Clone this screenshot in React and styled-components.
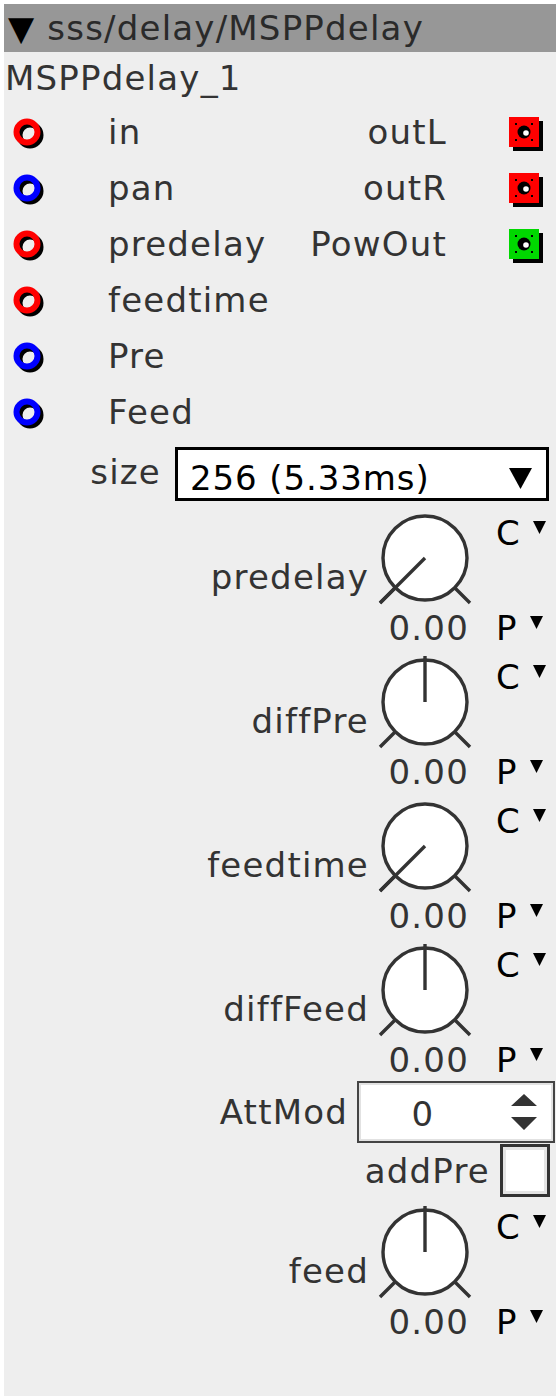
import React from 'react';
import styled, { createGlobalStyle } from 'styled-components';

const GlobalStyle = createGlobalStyle`
  body {
    margin: 0;
    background: #fff;
  }
`;

const Panel = styled.div`
  margin: 4px;
  width: 552px;
  height: 1392px;
  background: #eeeeee;
  font-family: "DejaVu Sans", sans-serif;
  font-size: 34px;
  letter-spacing: 1.2px;
  color: #333;
  overflow: hidden;
`;

const TitleBar = styled.div`
  height: 48px;
  line-height: 48px;
  padding-left: 4px;
  background: #979797;
  color: #2a2a2a;
  white-space: nowrap;
`;

const TitleArrow = styled.span`
  color: #000;
`;

const InstanceName = styled.div`
  height: 52px;
  line-height: 52px;
  padding-left: 1px;
`;

const Ports = styled.div`
  display: grid;
  grid-template-columns: 1fr auto;
`;

const PortColumn = styled.div`
  display: flex;
  flex-direction: column;
`;

const InRow = styled.div`
  height: 56px;
  display: flex;
  align-items: center;
  padding-left: 10px;
`;

const OutRow = styled.div`
  height: 56px;
  display: flex;
  align-items: center;
  justify-content: flex-end;
  padding-right: 17px;
`;

const PortLabel = styled.span`
  line-height: 56px;
  margin-left: ${p => (p.$out ? 0 : 68)}px;
  margin-right: ${p => (p.$out ? 62 : 0)}px;
`;

const PortSvg = styled.svg`
  display: block;
  overflow: visible;
  flex: none;
`;

const SizeRow = styled.div`
  margin-top: 7px;
  height: 54px;
  display: flex;
  justify-content: flex-end;
  align-items: center;
  padding-right: 7px;
`;

const SizeLabel = styled.span`
  margin-right: 14px;
  margin-bottom: 4px;
`;

const Dropdown = styled.div`
  box-sizing: border-box;
  width: 374px;
  height: 54px;
  border: 3px solid #000;
  background: #fff;
  color: #000;
  letter-spacing: 0.9px;
  display: flex;
  align-items: center;
  justify-content: space-between;
  padding: 8px 14px 0 12px;
`;

const KnobBlock = styled.div`
  display: grid;
  grid-template-columns: 1fr 96px 83px;
  grid-template-rows: 102px 36px;
  margin-top: ${p => p.$top}px;
  margin-bottom: 6px;
`;

const KnobLabel = styled.span`
  justify-self: end;
  padding-right: 8px;
  margin-top: 51px;
  line-height: 36px;
`;

const KnobSvg = styled.svg`
  display: block;
  margin-top: 2px;
`;

const ModeCell = styled.div`
  display: flex;
  align-items: flex-start;
  padding-left: 23px;
  padding-top: ${p => p.$top}px;
  line-height: 36px;
  color: #000;
`;

const ModeArrow = styled.svg`
  display: block;
  margin-left: 12px;
  margin-top: 6px;
`;

const Value = styled.span`
  grid-column: 2;
  justify-self: end;
  margin-right: 4px;
  line-height: 36px;
  white-space: nowrap;
`;

const FieldRow = styled.div`
  display: flex;
  justify-content: flex-end;
  align-items: center;
  height: ${p => p.$h}px;
  margin-top: ${p => p.$top}px;
  padding-right: ${p => p.$right}px;
`;

const FieldLabel = styled.span`
  margin-right: ${p => p.$gap}px;
`;

const Spinner = styled.div`
  box-sizing: border-box;
  width: 198px;
  height: 62px;
  border: 2px solid #444;
  box-shadow: inset 0 0 0 2px #e2e2e2;
  background: #fff;
  display: flex;
  align-items: center;
`;

const SpinValue = styled.span`
  width: 128px;
  text-align: center;
  padding-top: 4px;
`;

const SpinArrows = styled.svg`
  display: block;
  margin-left: 24px;
`;

const Checkbox = styled.div`
  box-sizing: border-box;
  width: 50px;
  height: 53px;
  border: 3px solid #333;
  box-shadow: inset 0 0 0 3px #e4e4e4;
  background: #fff;
`;

const inputs = [
  { name: 'in', color: '#ff0000' },
  { name: 'pan', color: '#0000ff' },
  { name: 'predelay', color: '#ff0000' },
  { name: 'feedtime', color: '#ff0000' },
  { name: 'Pre', color: '#0000ff' },
  { name: 'Feed', color: '#0000ff' },
];

const outputs = [
  { name: 'outL', color: '#ff0000' },
  { name: 'outR', color: '#ff0000' },
  { name: 'PowOut', color: '#00d800' },
];

function InPort({ color }) {
  return (
    <PortSvg width="26" height="26" viewBox="0 0 26 26">
      <circle cx="16" cy="16" r="10.5" fill="none" stroke="#000" strokeWidth="6" />
      <circle cx="13" cy="13" r="10.5" fill="none" stroke={color} strokeWidth="6" />
    </PortSvg>
  );
}

function OutPort({ color }) {
  return (
    <PortSvg width="30" height="30" viewBox="0 0 30 30">
      <rect x="4" y="4" width="30" height="30" fill="#000" />
      <rect x="0" y="0" width="30" height="30" fill={color} />
      <g fill="#000">
        <rect x="6" y="6" width="2" height="2" />
        <rect x="22" y="6" width="2" height="2" />
        <rect x="6" y="22" width="2" height="2" />
        <rect x="22" y="22" width="2" height="2" />
      </g>
      <circle cx="15" cy="15" r="6.5" fill="#000" />
      <circle cx="17" cy="16" r="2.8" fill="#fff" />
    </PortSvg>
  );
}

function SmallArrow() {
  return (
    <ModeArrow width="13" height="13" viewBox="0 0 13 13">
      <path d="M0 0 H13 L6.5 13 Z" fill="#000" />
    </ModeArrow>
  );
}

function Knob({ label, bipolar, top = 0 }) {
  const tip = bipolar ? 'M48 48 L48 2' : 'M48 48 L3 93';
  return (
    <KnobBlock $top={top}>
      <KnobLabel>{label}</KnobLabel>
      <KnobSvg width="96" height="96" viewBox="0 0 96 96">
        <circle cx="48" cy="48" r="42" fill="#fff" stroke="#333" strokeWidth="3.4" />
        <path d="M18.3 77.7 L3 93 M77.7 77.7 L93 93" stroke="#333" strokeWidth="3.4" />
        <path d={tip} stroke="#333" strokeWidth="3.4" />
      </KnobSvg>
      <ModeCell $top={7}>C<SmallArrow /></ModeCell>
      <Value>0.00</Value>
      <ModeCell $top={0}>P<SmallArrow /></ModeCell>
    </KnobBlock>
  );
}

export default function App() {
  return (
    <>
      <GlobalStyle />
      <Panel>
        <TitleBar>
          <TitleArrow>▼</TitleArrow> sss/delay/MSPPdelay
        </TitleBar>
        <InstanceName>MSPPdelay_1</InstanceName>

        <Ports>
          <PortColumn>
            {inputs.map(p => (
              <InRow key={p.name}>
                <InPort color={p.color} />
                <PortLabel>{p.name}</PortLabel>
              </InRow>
            ))}
          </PortColumn>
          <PortColumn>
            {outputs.map(p => (
              <OutRow key={p.name}>
                <PortLabel $out>{p.name}</PortLabel>
                <OutPort color={p.color} />
              </OutRow>
            ))}
          </PortColumn>
        </Ports>

        <SizeRow>
          <SizeLabel>size</SizeLabel>
          <Dropdown>
            <span>256 (5.33ms)</span>
            <svg width="23" height="21" viewBox="0 0 23 21">
              <path d="M0 0 H23 L11.5 21 Z" fill="#000" />
            </svg>
          </Dropdown>
        </SizeRow>

        <Knob label="predelay" top={7} />
        <Knob label="diffPre" bipolar />
        <Knob label="feedtime" />
        <Knob label="diffFeed" bipolar />

        <FieldRow $h={62} $top={-3} $right={1}>
          <FieldLabel $gap={9}>AttMod</FieldLabel>
          <Spinner>
            <SpinValue>0</SpinValue>
            <SpinArrows width="26" height="36" viewBox="0 0 26 36">
              <path d="M0 12 L13 0 L26 12 Z M0 23 H26 L13 36 Z" fill="#333" />
            </SpinArrows>
          </Spinner>
        </FieldRow>

        <FieldRow $h={53} $top={1} $right={6}>
          <FieldLabel $gap={10}>addPre</FieldLabel>
          <Checkbox />
        </FieldRow>

        <Knob label="feed" bipolar top={5} />
      </Panel>
    </>
  );
}
